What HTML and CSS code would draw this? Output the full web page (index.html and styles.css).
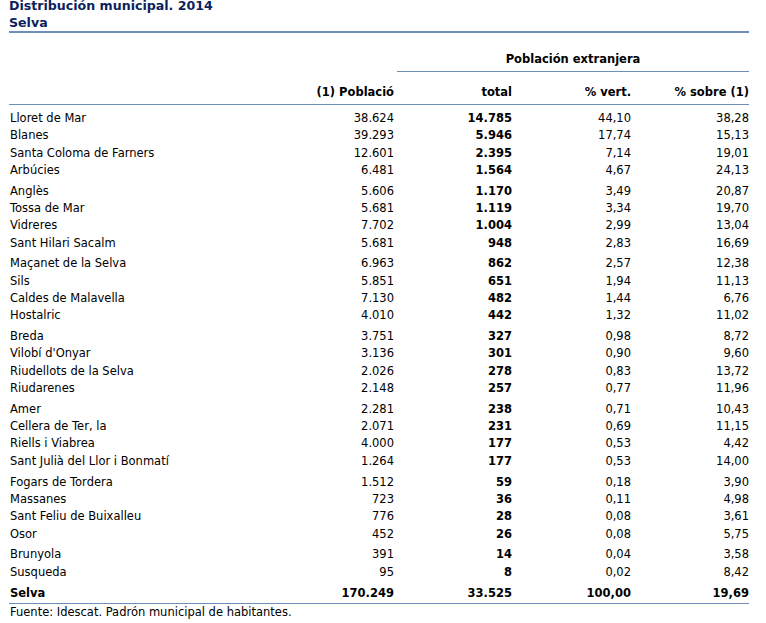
FILE: index.html
```html
<!DOCTYPE html>
<html lang="es">
<head>
<meta charset="utf-8">
<title>Distribución municipal. 2014</title>
<link rel="stylesheet" href="styles.css">
</head>
<body>
<div class="wrap">
  <h1 class="title">Distribución municipal. 2014<br>Selva</h1>
  <table class="data">
    <colgroup>
      <col class="c0"><col class="c1"><col class="c2"><col class="c3"><col class="c4">
    </colgroup>
    <thead>
      <tr class="h1">
        <th></th>
        <th></th>
        <th colspan="3" class="group">Población extranjera</th>
      </tr>
      <tr class="h2">
        <th></th>
        <th class="num">(1) Població</th>
        <th class="num">total</th>
        <th class="num">% vert.</th>
        <th class="num last">% sobre (1)</th>
      </tr>
    </thead>
    <tbody class="first">
      <tr><td>Lloret de Mar</td><td class="num">38.624</td><td class="num b">14.785</td><td class="num">44,10</td><td class="num last">38,28</td></tr>
      <tr><td>Blanes</td><td class="num">39.293</td><td class="num b">5.946</td><td class="num">17,74</td><td class="num last">15,13</td></tr>
      <tr><td>Santa Coloma de Farners</td><td class="num">12.601</td><td class="num b">2.395</td><td class="num">7,14</td><td class="num last">19,01</td></tr>
      <tr><td>Arbúcies</td><td class="num">6.481</td><td class="num b">1.564</td><td class="num">4,67</td><td class="num last">24,13</td></tr>
    </tbody>
    <tbody>
      <tr><td>Anglès</td><td class="num">5.606</td><td class="num b">1.170</td><td class="num">3,49</td><td class="num last">20,87</td></tr>
      <tr><td>Tossa de Mar</td><td class="num">5.681</td><td class="num b">1.119</td><td class="num">3,34</td><td class="num last">19,70</td></tr>
      <tr><td>Vidreres</td><td class="num">7.702</td><td class="num b">1.004</td><td class="num">2,99</td><td class="num last">13,04</td></tr>
      <tr><td>Sant Hilari Sacalm</td><td class="num">5.681</td><td class="num b">948</td><td class="num">2,83</td><td class="num last">16,69</td></tr>
    </tbody>
    <tbody>
      <tr><td>Maçanet de la Selva</td><td class="num">6.963</td><td class="num b">862</td><td class="num">2,57</td><td class="num last">12,38</td></tr>
      <tr><td>Sils</td><td class="num">5.851</td><td class="num b">651</td><td class="num">1,94</td><td class="num last">11,13</td></tr>
      <tr><td>Caldes de Malavella</td><td class="num">7.130</td><td class="num b">482</td><td class="num">1,44</td><td class="num last">6,76</td></tr>
      <tr><td>Hostalric</td><td class="num">4.010</td><td class="num b">442</td><td class="num">1,32</td><td class="num last">11,02</td></tr>
    </tbody>
    <tbody>
      <tr><td>Breda</td><td class="num">3.751</td><td class="num b">327</td><td class="num">0,98</td><td class="num last">8,72</td></tr>
      <tr><td>Vilobí d'Onyar</td><td class="num">3.136</td><td class="num b">301</td><td class="num">0,90</td><td class="num last">9,60</td></tr>
      <tr><td>Riudellots de la Selva</td><td class="num">2.026</td><td class="num b">278</td><td class="num">0,83</td><td class="num last">13,72</td></tr>
      <tr><td>Riudarenes</td><td class="num">2.148</td><td class="num b">257</td><td class="num">0,77</td><td class="num last">11,96</td></tr>
    </tbody>
    <tbody>
      <tr><td>Amer</td><td class="num">2.281</td><td class="num b">238</td><td class="num">0,71</td><td class="num last">10,43</td></tr>
      <tr><td>Cellera de Ter, la</td><td class="num">2.071</td><td class="num b">231</td><td class="num">0,69</td><td class="num last">11,15</td></tr>
      <tr><td>Riells i Viabrea</td><td class="num">4.000</td><td class="num b">177</td><td class="num">0,53</td><td class="num last">4,42</td></tr>
      <tr><td>Sant Julià del Llor i Bonmatí</td><td class="num">1.264</td><td class="num b">177</td><td class="num">0,53</td><td class="num last">14,00</td></tr>
    </tbody>
    <tbody>
      <tr><td>Fogars de Tordera</td><td class="num">1.512</td><td class="num b">59</td><td class="num">0,18</td><td class="num last">3,90</td></tr>
      <tr><td>Massanes</td><td class="num">723</td><td class="num b">36</td><td class="num">0,11</td><td class="num last">4,98</td></tr>
      <tr><td>Sant Feliu de Buixalleu</td><td class="num">776</td><td class="num b">28</td><td class="num">0,08</td><td class="num last">3,61</td></tr>
      <tr><td>Osor</td><td class="num">452</td><td class="num b">26</td><td class="num">0,08</td><td class="num last">5,75</td></tr>
    </tbody>
    <tbody>
      <tr><td>Brunyola</td><td class="num">391</td><td class="num b">14</td><td class="num">0,04</td><td class="num last">3,58</td></tr>
      <tr><td>Susqueda</td><td class="num">95</td><td class="num b">8</td><td class="num">0,02</td><td class="num last">8,42</td></tr>
    </tbody>
    <tfoot>
      <tr><td class="b">Selva</td><td class="num b">170.249</td><td class="num b">33.525</td><td class="num b">100,00</td><td class="num b last">19,69</td></tr>
    </tfoot>
  </table>
  <p class="source">Fuente: Idescat. Padrón municipal de habitantes.</p>
</div>
</body>
</html>
```
FILE: styles.css
```css
html, body {
  margin: 0;
  padding: 0;
  background: #fff;
}
body {
  padding: 0 8px;
  font-family: "DejaVu Sans", Verdana, sans-serif;
  color: #000;
}
.wrap {
  width: 740px;
  margin-left: 1px;
}
.title {
  margin: -2px 0 0 0;
  font-size: 12.6px;
  line-height: 16.5px;
  font-weight: bold;
  color: #0c1f5e;
  padding-bottom: 0;
  border-bottom: 2px solid #6f8fbb;
}
.data {
  width: 740px;
  border-collapse: collapse;
  table-layout: fixed;
  font-size: 11.5px;
}
.c0 { width: 270px; }
.c1 { width: 118px; }
.c2 { width: 118px; }
.c3 { width: 119px; }
.c4 { width: 115px; }
.data th, .data td {
  padding: 0 3px 0 0;
  white-space: nowrap;
  text-align: left;
  font-weight: normal;
}
.data td:first-child { padding-left: 1px; }
.data .num { text-align: right; }
.data .last { padding-right: 0; }
.data .b { font-weight: bold; }
.data thead th {
  font-weight: bold;
  vertical-align: bottom;
  line-height: 14px;
  padding-bottom: 5px;
}
.h1 th { height: 33px; padding-top: 0; }
.h1 .group {
  text-align: center;
  border-bottom: 1px solid #6f8fbb;
  padding-right: 0;
}
.h2 th { height: 27px; border-bottom: 1px solid #6f8fbb; }
.data tbody td, .data tfoot td {
  line-height: 17.33px;
  height: 17.33px;
}
.data tbody.first tr:first-child td { padding-top: 5px; }
.data tbody tr:first-child td { padding-top: 3.4px; }
.data tfoot td {
  padding-top: 4.5px;
  border-bottom: 1px solid #6f8fbb;
}
.source {
  margin: 1px 0 0 1px;
  font-size: 11.5px;
  line-height: 14px;
}
```
